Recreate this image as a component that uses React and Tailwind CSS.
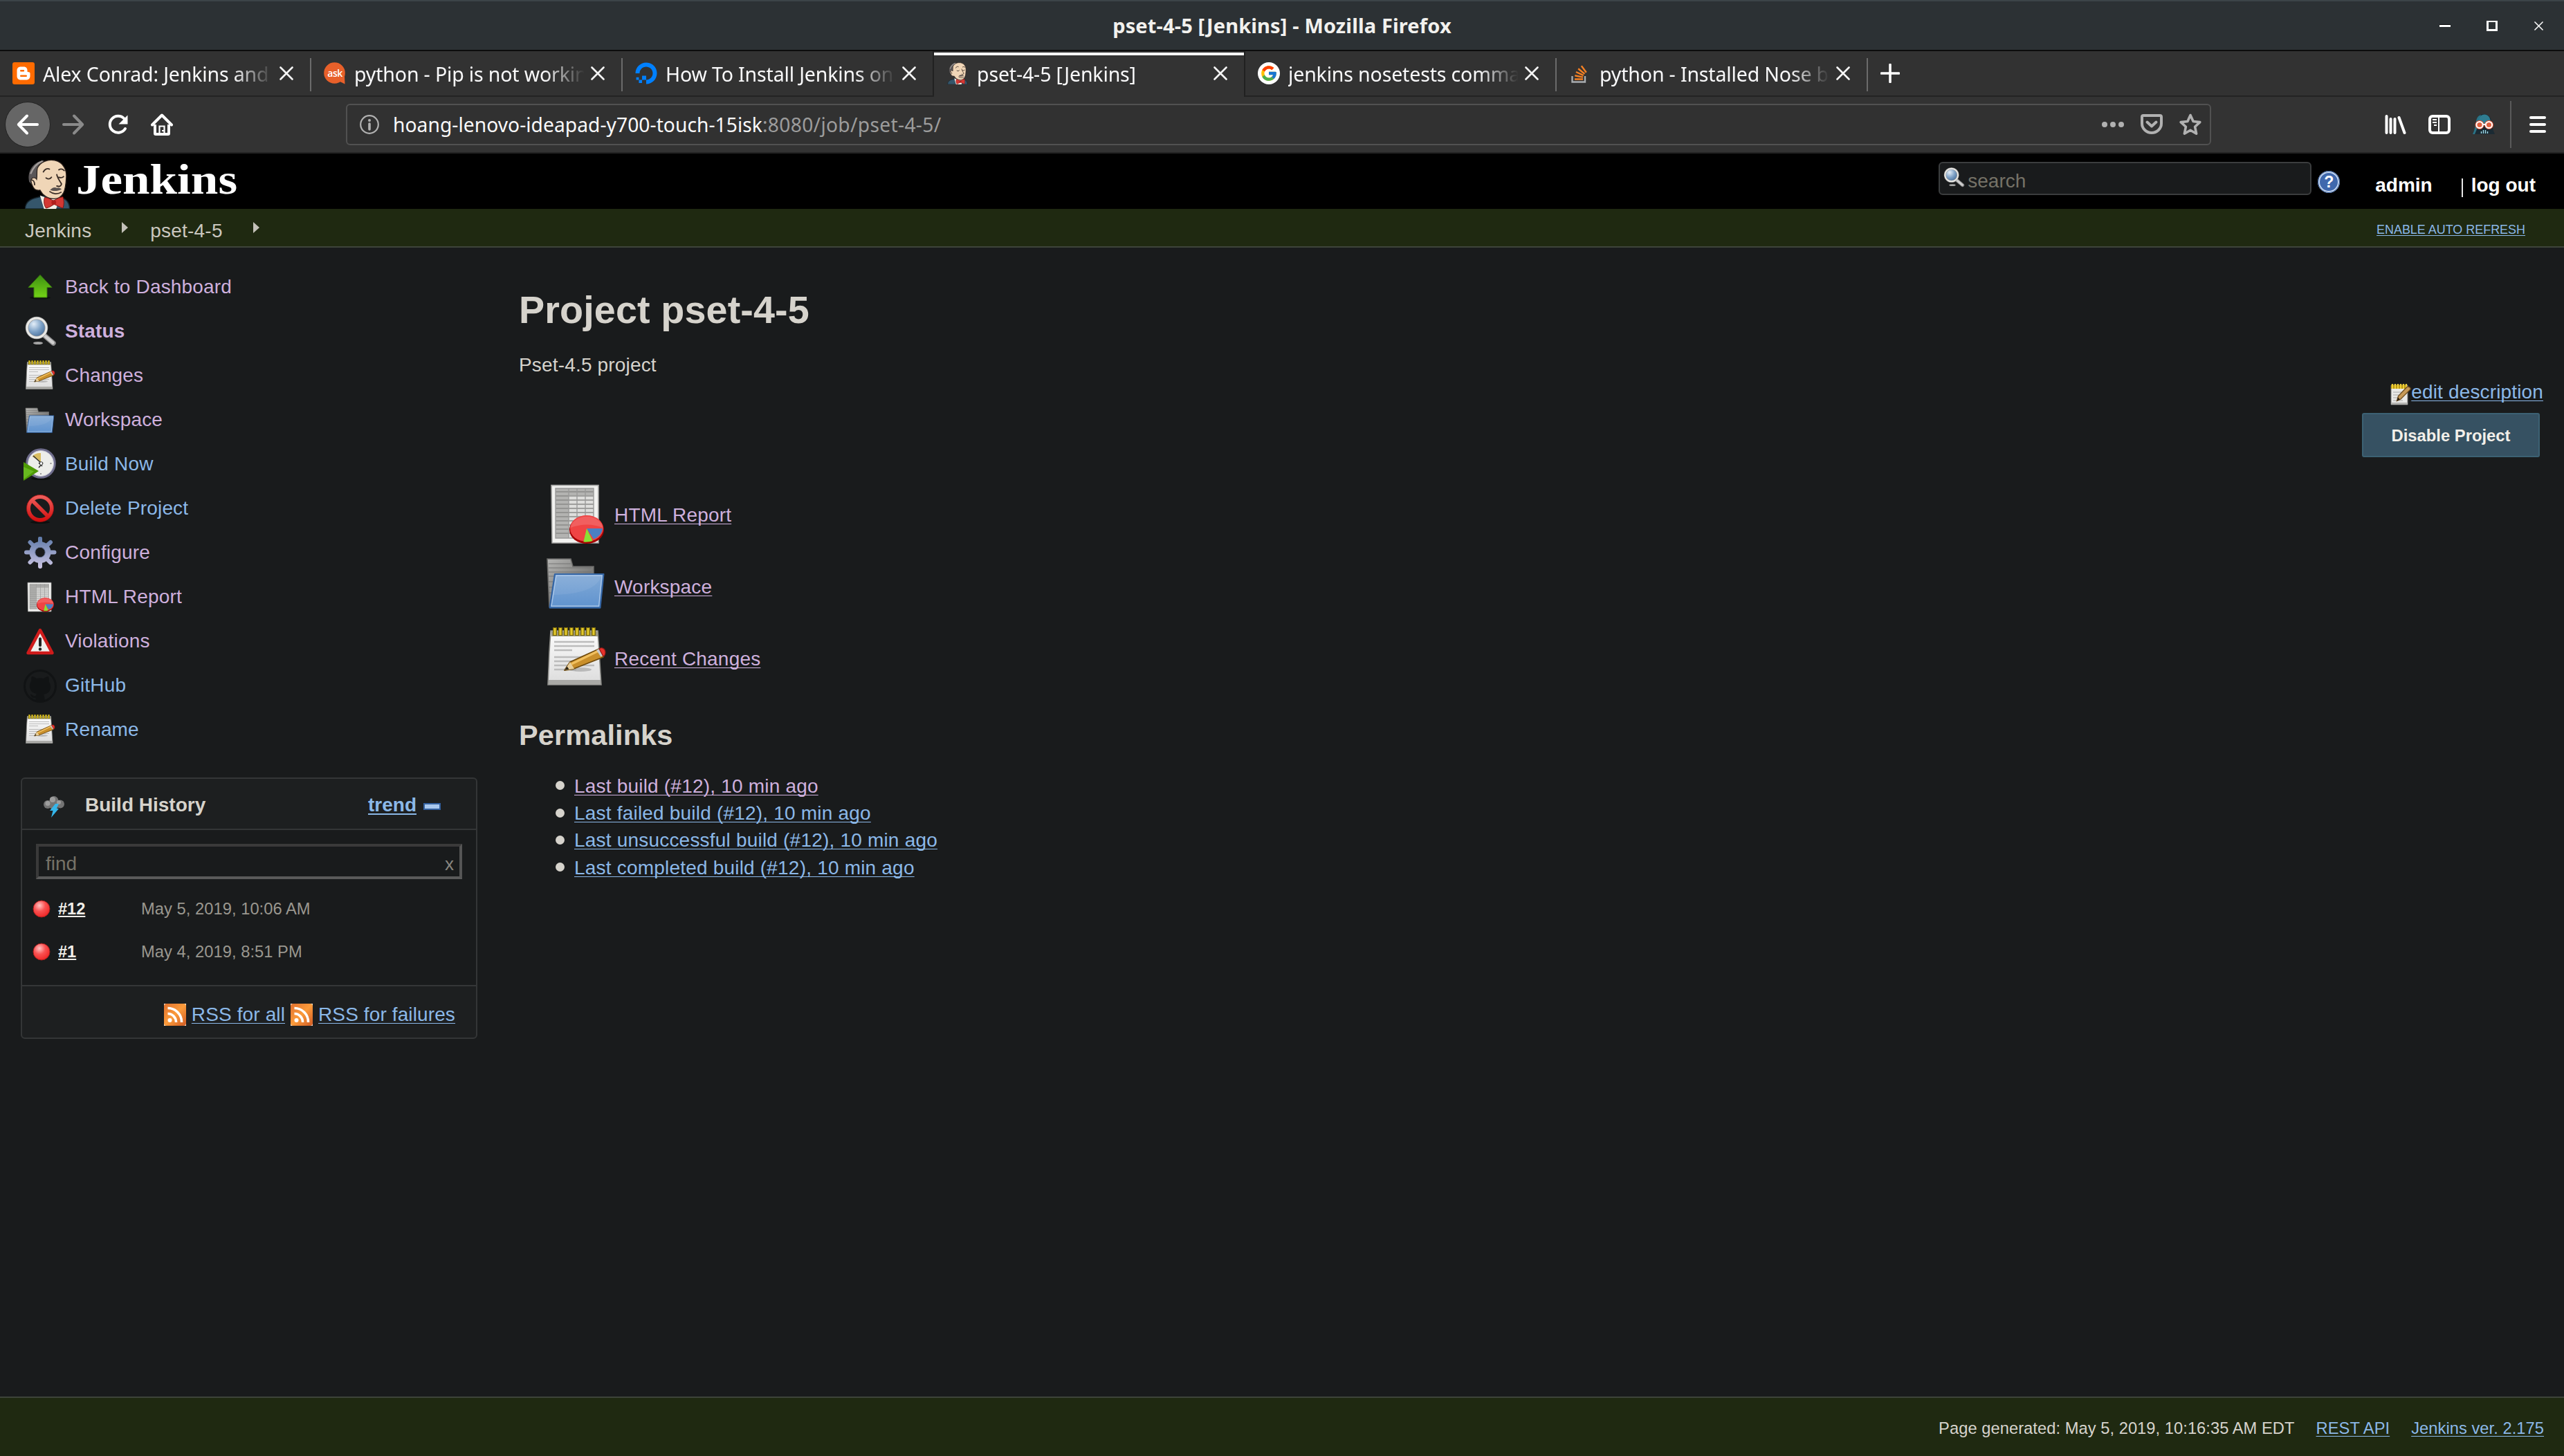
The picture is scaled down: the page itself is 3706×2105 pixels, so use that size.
import React from "react";
import { FcGoogle } from "react-icons/fc";
import { FaDigitalOcean } from "react-icons/fa";

/* ---------- browser icons ---------- */

const BloggerIcon = () => (
  <svg viewBox="0 0 32 32" className="size-8">
    <rect width="32" height="32" rx="3" fill="#ff6b00" />
    <path d="M12 6.5h4.5c3 0 5 2.200 5 5v1.500c0 .8.600 1.200 1.500 1.200 1.700 0 2.500.6 2.500 2v3.800c0 3.300-2.300 5.500-5.500 5.500h-8c-3.300 0-5.500-2.200-5.500-5.500v-8C6.500 8.700 8.700 6.500 12 6.500z" fill="#fff" />
    <path d="M12.200 12.200h3.800M12.200 19.700h7.600" stroke="#ff6b00" strokeWidth="2.400" strokeLinecap="round" />
  </svg>
);

const AskIcon = () => (
  <span className="relative flex size-8 items-center justify-center">
    <svg viewBox="0 0 32 32" className="absolute inset-0 size-8">
      <circle cx="15.500" cy="15.500" r="15.300" fill="#e8602a" />
      <path d="M22 26l8-6 .5 11.500-6-3z" fill="#e8602a" />
    </svg>
    <span className="relative font-['Open_Sans'] text-[14px] leading-none font-semibold tracking-[-0.500px] text-white">ask</span>
  </span>
);

const JenkinsHead = ({ className }) => (
  <svg viewBox="0 0 66 74" className={className} preserveAspectRatio="xMidYMin meet">
    <path d="M0 74c0-8 4-13 14-16l12-3 22 1 10 3c5 3 8 8 8 15z" fill="#35566b" stroke="#16242d" strokeWidth="1.500" />
    <path d="M22 54l6 20h18l6-18-14 4z" fill="#f3efe6" />
    <path d="M6 34C3 22 8 8 22 3l6-1L20 36l-6 6z" fill="#5a5657" />
    <path d="M8 22C12 12 18 6 26 3" stroke="#a39d9b" strokeWidth="2.500" fill="none" />
    <path d="M18 14C22 4 34 0 44 2c13 3 18 14 17 26-.5 9-1 16-4 22-3 6-8 9-14 9-9 0-17-5-21-13-3 1-8 0-10-4-3-5-5-12-1-14 3-1 5 0 6 2 1-6 0-11 1-16z" fill="#f0d6b7" stroke="#2b211c" strokeWidth="1.300" />
    <path d="M9 31c3 0 5 3 5 7M27 19c2-4 6-6 9-4M50 16c3-2 6-1 8 1M31 28c3 2 6 2 8-1M50 27c3 1 5 1 7-1M47 23c1 6 5 10 7 14-1 4-4 4-7 3" fill="none" stroke="#3a2d26" strokeWidth="1.900" strokeLinecap="round" />
    <path d="M37 46c3-3 6-5 10-3 3-1 6 0 7 2-6 3-12 3-17 1z" fill="#5b5350" />
    <path d="M36 48c5 4 12 5 18 1" fill="none" stroke="#3a2d26" strokeWidth="1.700" />
    <path d="M29 57c5 0 9 3 13 5 5-3 9-5 14-6 2 5 2 12 0 17-5-2-9-4-13-6-4 3-8 5-12 6-3-4-4-11-2-16z" fill="#d33833" stroke="#7c1512" strokeWidth="1" />
    <circle cx="42.500" cy="64.500" r="3.500" fill="#b01f1b" />
  </svg>
);

const StackIcon = () => (
  <svg viewBox="0 0 32 32" className="size-8" fill="none">
    <path d="M4.500 20v8.500h18.500V20" stroke="#a9adb0" strokeWidth="2.400" />
    <path d="M8 24.500h12M8.300 19.300l11.700 2.300M10 14l10.800 5M13.200 9.300l9.200 7.500M17.800 5.300l7 9.500" stroke="#f48024" strokeWidth="2.400" />
  </svg>
);

const CloseX = ({ className = "size-5" }) => (
  <svg viewBox="0 0 20 20" className={className}>
    <path d="M1.500 1.500l17 17M18.500 1.500l-17 17" stroke="#f5f5f5" strokeWidth="2.600" strokeLinecap="round" />
  </svg>
);

const ArrowIcon = ({ color, flip }) => (
  <svg viewBox="0 0 32 32" className={flip ? "size-8 -scale-x-100" : "size-8"}>
    <path d="M30 16H3M15 3.500L2.800 16 15 28.500" fill="none" stroke={color} strokeWidth="4" strokeLinecap="round" strokeLinejoin="round" />
  </svg>
);

const ReloadIcon = () => (
  <svg viewBox="0 0 32 32" className="size-8">
    <path d="M25.500 7.500A12 12 0 1 0 27 22" fill="none" stroke="#fff" strokeWidth="4" strokeLinecap="round" />
    <path d="M30.500 2.500v13h-13z" fill="#fff" />
  </svg>
);

const HomeIcon = () => (
  <svg viewBox="0 0 32 32" className="size-8">
    <path d="M2 16.500L16 2.500l14 14" fill="none" stroke="#fff" strokeWidth="4" strokeLinecap="round" strokeLinejoin="round" />
    <path d="M6 16v13a1 1 0 0 0 1 1h18a1 1 0 0 0 1-1V16" fill="none" stroke="#fff" strokeWidth="4" />
    <path d="M12.500 30V18.500h7V30M16 25h3" fill="none" stroke="#fff" strokeWidth="2.200" />
  </svg>
);

const InfoIcon = () => (
  <svg viewBox="0 0 28 28" className="size-7">
    <circle cx="14" cy="14" r="12.800" fill="none" stroke="#b1b1b1" strokeWidth="2.200" />
    <circle cx="14" cy="8" r="2" fill="#b1b1b1" />
    <path d="M14 13v8" stroke="#b1b1b1" strokeWidth="3.600" strokeLinecap="round" />
  </svg>
);

const DotsIcon = () => (
  <svg viewBox="0 0 32 32" className="size-8" fill="#b1b1b1">
    <circle cx="4" cy="16" r="4" /><circle cx="16" cy="16" r="4" /><circle cx="28" cy="16" r="4" />
  </svg>
);

const PocketIcon = () => (
  <svg viewBox="0 0 32 32" className="size-8" fill="none" stroke="#b1b1b1" strokeLinecap="round" strokeLinejoin="round">
    <path d="M4 3h24a2 2 0 0 1 2 2v9.500a14 13.500 0 0 1-28 0V5a2 2 0 0 1 2-2z" strokeWidth="4" />
    <path d="M9.500 12.500l6.500 6 6.500-6" strokeWidth="4" />
  </svg>
);

const StarIcon = () => (
  <svg viewBox="0 0 32 32" className="size-8">
    <path d="M16 2.500l4.100 9 9.700 1.100-7.200 6.700 2 9.900L16 24.300l-8.600 4.900 2-9.900-7.200-6.700 9.700-1.100z" fill="none" stroke="#b1b1b1" strokeWidth="3.600" strokeLinejoin="round" />
  </svg>
);

const LibraryIcon = () => (
  <svg viewBox="0 0 32 32" className="size-8" stroke="#fff" strokeWidth="4" strokeLinecap="round">
    <path d="M4 4v24M10 8v20M16 8v20M22 6l8 22" transform="translate(-0.500 0)" />
  </svg>
);

const SidebarIcon = () => (
  <svg viewBox="0 0 32 32" className="size-8" fill="none" stroke="#fff">
    <rect x="2" y="4" width="28" height="24" rx="4" strokeWidth="4" />
    <path d="M15 4v24" strokeWidth="2" />
    <path d="M6 9h6M6 13h6M8 17h4" strokeWidth="2" />
  </svg>
);

const VaderIcon = () => (
  <svg viewBox="0 0 32 32" className="size-8">
    <path d="M0 30C3 24 4 17 5 11 6 4 11 1 16 1s10 3 11 10c1 6 2 13 5 19z" fill="#1b2a33" />
    <path d="M0 30C3 24 4 17 5 11 6 6 8 3 12 2L8 18 3 30z" fill="#2b7386" />
    <path d="M9 12C9 5 12 1.500 17 1.500S25 5 26 12l-4 5H12z" fill="#2f7d91" />
    <circle cx="10" cy="16.500" r="5" fill="#e8502f" stroke="#e8502f" strokeWidth="3" />
    <circle cx="23.500" cy="16.500" r="5" fill="#e8502f" stroke="#e8502f" strokeWidth="3" />
    <circle cx="10" cy="16.500" r="4.600" fill="#e0603f" stroke="#fff" strokeWidth="2" />
    <circle cx="23.500" cy="16.500" r="4.600" fill="#e0603f" stroke="#fff" strokeWidth="2" />
    <path d="M14.500 16h4.500" stroke="#fff" strokeWidth="2" />
    <path d="M12.500 26v3M15.500 24v5M18.500 24v5M21.500 26v3" stroke="#9fdcea" strokeWidth="1.400" />
  </svg>
);

/* ---------- page icons ---------- */

const UpIcon = ({ className }) => (
  <svg viewBox="0 0 48 48" className={className}>
    <defs><linearGradient id="up" x1="0" y1="0" x2="0" y2="1"><stop offset="0" stopColor="#3d8f12" /><stop offset="1" stopColor="#73d216" /></linearGradient></defs>
    <ellipse cx="24" cy="38.500" rx="15" ry="2" fill="#0d0f0f" />
    <path d="M24 5.500l17 18h-7v14.500H15V23.500H7z" fill="url(#up)" stroke="#3a7d0c" strokeWidth="1" />
  </svg>
);

const SearchIcon = ({ className }) => (
  <svg viewBox="0 0 48 48" className={className}>
    <defs><radialGradient id="lens" cx="0.350" cy="0.300" r="0.800"><stop offset="0" stopColor="#e4eef8" /><stop offset="0.500" stopColor="#7da1c6" /><stop offset="1" stopColor="#3d638f" /></radialGradient></defs>
    <ellipse cx="21" cy="40" rx="7" ry="2" fill="#c7c7c7" opacity="0.800" />
    <path d="M29 28l14 12" stroke="#8b8b8b" strokeWidth="7.500" strokeLinecap="round" />
    <path d="M29 28l13.500 11.500" stroke="#cfcfcf" strokeWidth="4.500" strokeLinecap="round" />
    <circle cx="19" cy="18" r="14" fill="url(#lens)" stroke="#9b9b9b" strokeWidth="4.500" />
    <circle cx="19" cy="18" r="14" fill="none" stroke="#e9e9e6" strokeWidth="3" />
  </svg>
);

const NotepadIcon = ({ className }) => (
  <svg viewBox="0 0 48 48" className={className}>
    <defs>
      <linearGradient id="paper" x1="0" y1="0" x2="0" y2="1"><stop offset="0" stopColor="#fcfcfc" /><stop offset="1" stopColor="#dcdcdc" /></linearGradient>
    </defs>
    <path d="M5.500 3.500h34l1 15 1.500 24H3.500l1-24z" fill="url(#paper)" stroke="#8a8a86" strokeWidth="0.800" />
    <path d="M6 4h33.500v3.500H6z" fill="#9a9780" />
    <path d="M4 39h37.500v3H4z" fill="#a9a9a6" />
    <path d="M8.500 1v6M12.500 1v6M16.500 1v6M20.500 1v6M24.500 1v6M28.500 1v6M32.500 1v6M36.500 1v6" stroke="#7b6a0c" strokeWidth="3" />
    <path d="M8.500 1.500v5M12.500 1.500v5M16.500 1.500v5M20.500 1.500v5M24.500 1.500v5M28.500 1.500v5M32.500 1.500v5M36.500 1.500v5" stroke="#e3c92c" strokeWidth="1.600" />
    <path d="M8 11.500h29M8 14.500h29M8 17.500h13M8 22.500h29M8 25.500h24M8 28.500h29M8 31.500h16" stroke="#bcbcbc" strokeWidth="1.200" />
    <ellipse cx="27" cy="31.500" rx="8" ry="1.500" fill="#9c9c9c" opacity="0.600" />
    <path d="M15.500 32l4-6L40.500 16.500l4 3-1 3L22 31z" fill="#c98f2b" stroke="#6e4a0e" strokeWidth="0.900" strokeLinejoin="round" />
    <path d="M20.500 27.500L40 18" stroke="#f0bf5e" strokeWidth="1.600" />
    <path d="M15.500 32l4-6 3 5z" fill="#e8cf9c" />
    <path d="M15.500 32l1.800-2.700 1.400 2z" fill="#2b2418" />
    <path d="M38.500 17.500l2.500-1.200 3 4.700-2.300 1.300z" fill="#c9c9c9" />
    <path d="M40.500 16.500c2-1.500 4.500 0 4.500 2.500 0 1.500-.5 2.500-1.500 3z" fill="#e8312b" stroke="#8f1a16" strokeWidth="0.600" />
  </svg>
);

const FolderIcon = ({ className }) => (
  <svg viewBox="0 0 48 48" className={className}>
    <defs>
      <linearGradient id="fold" x1="0" y1="0" x2="0" y2="1"><stop offset="0" stopColor="#83aad6" /><stop offset="1" stopColor="#5f93cf" /></linearGradient>
      <linearGradient id="foldback" x1="0" y1="0" x2="1" y2="1"><stop offset="0" stopColor="#b5b5b3" /><stop offset="1" stopColor="#585856" /></linearGradient>
    </defs>
    <g transform="translate(0 -2.500)">
      <path d="M3 8.500h17l1.500 5.500H36.500V43H4.500z" fill="url(#foldback)" stroke="#6a6a68" strokeWidth="0.800" />
      <path d="M4 12h16M4 15h31M4 18h31M4 21h6M4 25h4M4 29h4M4 33h4" stroke="#6b6b69" strokeWidth="0.400" />
      <path d="M8.500 19.500h35.200l-2.500 24.300H4.800z" fill="url(#fold)" stroke="#3465a4" strokeWidth="1.100" strokeLinejoin="round" />
      <path d="M9.500 20.600h33l-2.200 22H6z" fill="none" stroke="#a9c6e8" strokeWidth="0.700" />
      <path d="M9.500 21h32.500c-3 9-15 13-34.500 13.500z" fill="#fff" opacity="0.070" />
    </g>
  </svg>
);

const ReportIcon = ({ className }) => (
  <svg viewBox="0 0 48 48" className={className}>
    <path d="M6 2.300h34V44H6.500z" fill="#f2f2f0" stroke="#a5a5a3" strokeWidth="0.800" />
    <rect x="9" y="4.500" width="27.500" height="36" fill="#dededc" />
    <rect x="9" y="4.500" width="27.500" height="5" fill="#b3b3b1" />
    <rect x="9" y="4.500" width="9.500" height="36" fill="#b3b3b1" />
    <path d="M9 7h27.500M9 10h27.500M9 13h27.500M9 16h27.500M9 19h27.500M9 22h27.500M9 25h27.500M9 28h27.500M9 31h27.500M9 34h27.500M9 37h27.500" stroke="#8a8a88" strokeWidth="0.700" />
    <path d="M9 4.500h27.500v36H9zM18.500 4.500v36M24.500 4.500v36M30.500 4.500v36" fill="none" stroke="#9b9b99" strokeWidth="0.700" />
    <ellipse cx="31.500" cy="34.500" rx="12.500" ry="10" fill="#a40000" />
    <ellipse cx="31.500" cy="33.500" rx="12" ry="9.500" fill="#ef4444" />
    <path d="M19.800 33a11.800 9.300 0 0 1 23.400 0c-7-3-16-3-23.400 0z" fill="#fff" opacity="0.150" />
    <path d="M31.500 33.500h11.500a12 10 0 0 1-6.500 7.800z" fill="#4a80c4" />
    <path d="M31.500 33.500l4.300 9c-2 .7-4.300 1-6.600.8z" fill="#8ae234" />
  </svg>
);

const ClockIcon = ({ className }) => (
  <svg viewBox="0 0 48 48" className={className}>
    <ellipse cx="25" cy="44" rx="14" ry="2" fill="#0d0f0f" />
    <circle cx="25" cy="22" r="20" fill="#ededea" stroke="#6f6d8c" strokeWidth="3.500" />
    <circle cx="25" cy="22" r="18.500" fill="none" stroke="#c6c5d6" strokeWidth="1" />
    <path d="M25 20L12.500 12A15 15 0 0 1 25 7z" fill="#d9bd62" />
    <path d="M14 11l11 10M27 26l-5-5M22 28l6-7" stroke="#333" strokeWidth="1.600" />
    <circle cx="25.500" cy="22" r="2.300" fill="#fff" stroke="#333" strokeWidth="1" />
    <path d="M38.500 22h2M25 36v2" stroke="#777" strokeWidth="1.400" />
    <path d="M0 20l22 13L0 47z" fill="#4e9a06" />
    <path d="M0 27l15 6.500L0 45z" fill="#67b81f" />
  </svg>
);

const StopIcon = ({ className }) => (
  <svg viewBox="0 0 48 48" className={className}>
    <defs><linearGradient id="stop" x1="0" y1="0" x2="0" y2="48" gradientUnits="userSpaceOnUse"><stop offset="0.100" stopColor="#ef5f5c" /><stop offset="0.900" stopColor="#d10a0a" /></linearGradient></defs>
    <ellipse cx="24" cy="43" rx="14" ry="2" fill="#0d0f0f" />
    <g fill="none" stroke="url(#stop)" strokeWidth="5.500"><circle cx="24" cy="23" r="16.800" /><path d="M12.500 11.500l23 23" /></g>
    <circle cx="24" cy="23" r="19.500" fill="none" stroke="#a21010" strokeWidth="0.800" />
  </svg>
);

const GearIcon = ({ className }) => (
  <svg viewBox="0 0 48 48" className={className}>
    <defs><linearGradient id="gear" x1="0" y1="0" x2="0" y2="46" gradientUnits="userSpaceOnUse"><stop offset="0" stopColor="#5d79a8" /><stop offset="1" stopColor="#cdc6e4" /></linearGradient></defs>
    <g fill="none" stroke="url(#gear)">
      <circle cx="24" cy="22.500" r="11.300" strokeWidth="8.500" />
      <path d="M24.010 8V2.500M24.010 37v6M9.500 22.510H4M38.500 22.510H44.500M14 12.500L9.500 8M34 32.500l5 5M34 12.500L39 8M14 32.500L9.500 37" strokeWidth="6" strokeLinecap="round" />
    </g>
    <circle cx="24" cy="22.500" r="7.200" fill="#191b1c" stroke="#5f6f93" strokeWidth="1" />
  </svg>
);

const WarningIcon = ({ className }) => (
  <svg viewBox="0 0 48 48" className={className}>
    <path d="M24 7l17.500 33h-35z" fill="#efefed" stroke="#cf1b1b" strokeWidth="4.500" strokeLinejoin="round" />
    <path d="M24 19.500v9.500" stroke="#222" strokeWidth="4" strokeLinecap="round" />
    <circle cx="24" cy="34.500" r="2.200" fill="#222" />
  </svg>
);

const GithubBadge = ({ className }) => (
  <svg viewBox="0 0 48 48" className={className}>
    <circle cx="24" cy="24" r="22.500" fill="none" stroke="#111314" strokeWidth="3" />
    <path d="M12 10c3 0 5 2 7 3 3-1 7-1 10 0 2-1 4-3 7-3 1 3 1 5 .5 7 2 3 3 6 2.500 10-1 6-5 8-10 9 1.500 2 1.500 5 1.500 10h-13v-5c-5 1-6-2-8-5 3-1 4 3 8 2 0-1 .5-2 1.500-3-5-1-9-3-10-9-.5-4 .5-7 2.500-10-.5-2-.5-4 .5-6z" fill="#111314" />
  </svg>
);

const StormIcon = ({ className }) => (
  <svg viewBox="0 0 32 32" className={className}>
    <g fill="#747474"><circle cx="7" cy="13" r="6" /><circle cx="16" cy="7.500" r="6.500" /><circle cx="25" cy="12.500" r="6" /><circle cx="16" cy="13.500" r="7" /></g>
    <g fill="#9d9d9d"><circle cx="14" cy="6" r="4" /><circle cx="7" cy="11.500" r="3.500" /><circle cx="23" cy="10" r="3" /></g>
    <path d="M18 12h5l-3.500 7H23L12 32l2.500-10H10z" fill="#35b6ea" />
  </svg>
);

const BallIcon = () => (
  <svg viewBox="0 0 26 26" className="size-[26px]">
    <defs><radialGradient id="ball" cx="0.380" cy="0.300" r="0.700"><stop offset="0" stopColor="#ffc4c4" /><stop offset="0.500" stopColor="#f95252" /><stop offset="1" stopColor="#ef2929" /></radialGradient></defs>
    <circle cx="13" cy="13" r="12" fill="url(#ball)" stroke="#a81c1c" strokeWidth="1" />
  </svg>
);

const RssIcon = () => (
  <svg viewBox="0 0 32 32" className="size-8 shrink-0">
    <defs><linearGradient id="rss" x1="0" y1="0" x2="1" y2="1"><stop offset="0" stopColor="#e0702e" /><stop offset="0.500" stopColor="#fb9b3b" /><stop offset="1" stopColor="#cf5a24" /></linearGradient></defs>
    <rect width="32" height="32" fill="#fbe9d8" />
    <rect width="32" height="32" rx="4" fill="url(#rss)" />
    <circle cx="8.500" cy="24" r="3" fill="#fff" />
    <path d="M5.500 14.500a12 12 0 0 1 12 12.500M5.500 6.500a20 20 0 0 1 20 20.500" fill="none" stroke="#fff" strokeWidth="3.600" />
  </svg>
);

const HelpIcon = () => (
  <span className="flex size-8 items-center justify-center rounded-full border-[3px] border-[#c5d6ee] bg-[#3f68ad] font-['Liberation_Sans'] text-[23px] leading-none font-bold text-white outline-1 -outline-offset-1 outline-[#2f5697]">?</span>
);

const EditIcon = () => (
  <svg viewBox="0 0 32 32" className="size-8">
    <path d="M3 3h24v28H3z" fill="#e9e9e7" stroke="#777" strokeWidth="1" />
    <path d="M3 28h24v3H3z" fill="#b3b3b0" />
    <path d="M3 2.500h23v5.500H3z" fill="#b8930c" />
    <path d="M5 1v7M9 1v7M13 1v7M17 1v7M21 1v7M25 1v7" stroke="#edcf3a" strokeWidth="2.200" />
    <path d="M6 13h14M6 17h12M6 21h8M6 25h14" stroke="#bdbdbd" strokeWidth="1.400" />
    <path d="M11.500 25.500l2-7L26 5.500c2-1.500 6 1 5 3.500L17 23z" fill="#c79a58" stroke="#6b4a1c" strokeWidth="1.300" />
    <path d="M11.500 25.500l1.500-5 3 3z" fill="#2e2213" />
  </svg>
);

/* ---------- data ---------- */

const tabs = [
  { icon: <BloggerIcon />, title: "Alex Conrad: Jenkins and" },
  { icon: <AskIcon />, title: "python - Pip is not workin" },
  { icon: <FaDigitalOcean className="size-8 text-[#0080ff]" />, title: "How To Install Jenkins on" },
  { icon: <JenkinsHead className="size-8" />, title: "pset-4-5 [Jenkins]", active: true },
  { icon: <span className="flex size-8 items-center justify-center rounded-full bg-white"><FcGoogle className="size-[26px]" /></span>, title: "jenkins nosetests comma" },
  { icon: <StackIcon />, title: "python - Installed Nose b" },
];

const VISITED = "text-[#ceb0dd]";
const LINK = "text-[#8bb8e8]";

const tasks = [
  { Icon: UpIcon, label: "Back to Dashboard", color: VISITED },
  { Icon: SearchIcon, label: "Status", color: "text-[#ceb0dd] font-bold" },
  { Icon: NotepadIcon, label: "Changes", color: VISITED },
  { Icon: FolderIcon, label: "Workspace", color: VISITED },
  { Icon: ClockIcon, label: "Build Now", color: LINK },
  { Icon: StopIcon, label: "Delete Project", color: LINK },
  { Icon: GearIcon, label: "Configure", color: VISITED },
  { Icon: ReportIcon, label: "HTML Report", color: VISITED },
  { Icon: WarningIcon, label: "Violations", color: VISITED },
  { Icon: GithubBadge, label: "GitHub", color: LINK },
  { Icon: NotepadIcon, label: "Rename", color: LINK },
];

const shortcuts = [
  { Icon: ReportIcon, label: "HTML Report", nudge: "mt-0" },
  { Icon: FolderIcon, label: "Workspace", nudge: "-mt-[11px]" },
  { Icon: NotepadIcon, label: "Recent Changes", nudge: "mt-0" },
];

const permalinks = [
  { label: "Last build (#12), 10 min ago", color: VISITED },
  { label: "Last failed build (#12), 10 min ago", color: LINK },
  { label: "Last unsuccessful build (#12), 10 min ago", color: LINK },
  { label: "Last completed build (#12), 10 min ago", color: LINK },
];

const builds = [
  { id: "#12", date: "May 5, 2019, 10:06 AM" },
  { id: "#1", date: "May 4, 2019, 8:51 PM" },
];

const thin = "underline decoration-1 underline-offset-[3px] [text-decoration-skip-ink:none]";

/* ---------- browser chrome ---------- */

function TitleBar() {
  return (
    <div className="grid h-[74px] grid-cols-[1fr_auto_1fr] items-center border-t-2 border-b-2 border-t-[#3c4448] border-b-[#0c0c0c] bg-[#2c3134]">
      <span />
      <span className="text-[29px] leading-9 font-bold tracking-[0.150px] text-[#f2f1ee]">pset-4-5 [Jenkins] - Mozilla Firefox</span>
      <div className="flex items-center justify-end pr-[30px]">
        <span className="mr-[52px] h-1 w-4 border-t border-black bg-white" />
        <span className="mr-[53px] h-[15px] w-4 border-[3px] border-t-2 border-white" />
        <CloseX className="size-[13px]" />
      </div>
    </div>
  );
}

function Tab({ icon, title, active, beforeActive }) {
  return (
    <div className={active
      ? "relative flex h-[66px] w-[450px] items-center border-r-2 border-[#212121] bg-[#333333] pb-0.5 pl-[18px]"
      : "relative flex h-[66px] w-[450px] items-center border-b-2 border-[#232323] pl-[18px]"}>
      {active && <span className="absolute top-0.5 left-0 h-1 w-[448px] bg-white" />}
      {icon}
      <span className="ml-3 w-[336px] overflow-hidden pt-0.5 text-[28.500px] leading-[38px] tracking-[-0.150px] whitespace-nowrap text-[#f9f9fa] [mask-image:linear-gradient(to_right,black_82%,transparent_99%)]">{title}</span>
      <span className="ml-1.5 flex"><CloseX /></span>
      {!active && <span className={beforeActive ? "absolute top-0 right-0 h-16 w-0.5 bg-[#212121]" : "absolute top-2.5 right-0 h-12 w-0.5 bg-[#6b6b6b]"} />}
    </div>
  );
}

function TabStrip() {
  return (
    <div className="flex h-[66px] bg-[#323232]">
      {tabs.map((t, i) => <Tab key={t.title} {...t} beforeActive={i === 2} />)}
      <div className="flex flex-1 items-center border-b-2 border-[#232323] pl-[18px]">
        <svg viewBox="0 0 28 28" className="size-7"><path d="M14 1.500v25M1.500 14h25" stroke="#fff" strokeWidth="3.600" strokeLinecap="round" /></svg>
      </div>
    </div>
  );
}

function Toolbar() {
  return (
    <div className="flex h-[82px] items-center border-b-2 border-[#232323] bg-[#333333]">
      <span className="ml-[7px] flex size-[66px] items-center justify-center rounded-full border border-[#222] bg-[#666666]"><ArrowIcon color="#fff" /></span>
      <span className="ml-[17px]"><ArrowIcon color="#8a8a8a" flip /></span>
      <span className="ml-[32px]"><ReloadIcon /></span>
      <span className="ml-[32px]"><HomeIcon /></span>
      <div className="ml-[250px] flex h-[60px] w-[2696px] items-center rounded-[6px] border-2 border-[#515151] bg-[#313131] pl-[18px] text-[28.200px] leading-[38px]">
        <InfoIcon />
        <span className="ml-5 tracking-[0.050px] text-[#f9f9fa]">hoang-lenovo-ideapad-y700-touch-15isk<span className="tracking-[0.320px] text-[#9c9c9c]">:8080/job/pset-4-5/</span></span>
        <div className="mr-3 ml-auto flex gap-6"><DotsIcon /><PocketIcon /><StarIcon /></div>
      </div>
      <div className="ml-auto flex h-[68px] items-center gap-8 border-r-2 border-[#5a5a5a] pr-[22px]">
        <LibraryIcon /><SidebarIcon /><VaderIcon />
      </div>
      <div className="mr-[26px] ml-[26px] flex flex-col gap-1.5">
        <span className="h-1 w-6 rounded-full bg-white" />
        <span className="h-1 w-6 rounded-full bg-white" />
        <span className="h-1 w-6 rounded-full bg-white" />
      </div>
    </div>
  );
}

/* ---------- Jenkins page ---------- */

function Header() {
  return (
    <header className="flex h-20 items-start bg-black text-[28px] leading-8 text-white">
      <JenkinsHead className="mt-2 ml-[36px] h-[72px] w-[65px]" />
      <span className="mt-[8px] ml-[9px] origin-left scale-x-[1.165] font-['Liberation_Serif'] text-[61px] leading-[60px] font-bold">Jenkins</span>
      <div className="mt-3 ml-auto flex h-12 w-[539px] items-center rounded-[6px] border-2 border-[#3b3d3e] bg-[#191b1c] pl-1">
        <SearchIcon className="size-8 -translate-y-px" />
        <span className="ml-1 pt-[7px] text-[#757267]">search</span>
      </div>
      <span className="mt-[25px] ml-[9px]"><HelpIcon /></span>
      <span className="mt-[30px] ml-[51px] font-bold">admin</span>
      <span className="mt-[36px] ml-[42px] h-[27px] w-0.5 bg-[#e8e8e8]" />
      <span className="mt-[30px] mr-[41px] ml-[12px] font-bold">log out</span>
    </header>
  );
}

const Chevron = ({ className }) => (
  <svg viewBox="0 0 9 16" className={`h-4 w-[9px] ${className}`}><path d="M0 0l9 8-9 8z" fill="#c3c1b9" /></svg>
);

function Breadcrumbs() {
  return (
    <nav className="flex h-14 items-center border-b-2 border-[#3e443a] bg-[#1f2911] text-[28px] leading-8 text-[#cac7bf]">
      <span className="ml-[36px] pt-[9px] tracking-[0.200px]">Jenkins</span>
      <Chevron className="ml-[44px]" />
      <span className="ml-[32px] pt-[9px] tracking-[0.200px]">pset-4-5</span>
      <Chevron className="ml-[44px]" />
      <a className={`mr-[56px] ml-auto pt-1.5 text-[17.950px] leading-6 underline decoration-1 underline-offset-2 ${LINK}`}>ENABLE AUTO REFRESH</a>
    </nav>
  );
}

function BuildHistory() {
  return (
    <section className="mt-[37px] ml-[30px] h-[378px] w-[660px] rounded-[6px] border-2 border-[#343637] bg-[#1d1f20]">
      <div className="flex h-[74px] items-center border-b-2 border-[#343637] font-bold">
        <StormIcon className="ml-[30px] size-8 translate-y-1" />
        <span className="ml-[29px] pt-1 text-[#d6d3cc]">Build History</span>
        <a className={`ml-auto pt-1 underline decoration-2 underline-offset-[3px] ${LINK}`}>trend</a>
        <span className="mt-[8px] mr-[51px] ml-[10px] h-[10px] w-[25px] border-2 border-[#33609f] bg-[#a9c8ee]" />
      </div>
      <div className="flex h-[224px] flex-col bg-[#191b1c] pt-5">
        <div className="mx-5 flex h-[51px] items-center justify-between border-4 border-t-[#3a3a3a] border-r-[#555] border-b-[#5a5a5a] border-l-[#3a3a3a] pr-2 pl-[10px] text-[#757267]">
          <span className="pt-1.5">find</span>
          <span className="pt-1.5 text-[26px] text-[#8a8780]">x</span>
        </div>
        <div className="mt-[12px]">
          {builds.map((b) => (
            <div key={b.id} className="flex h-[62px] items-center pl-[15px]">
              <BallIcon />
              <a className="ml-[11px] w-[120px] text-[23.600px] font-bold text-[#f0eee9] underline decoration-2 underline-offset-2 [text-decoration-skip-ink:none]">{b.id}</a>
              <span className="text-[23.700px] tracking-[0.050px] text-[#9a978f]">{b.date}</span>
            </div>
          ))}
        </div>
      </div>
      <div className="flex h-[76px] items-center justify-end border-t-2 border-[#343637] pt-[7px] pr-[30px] tracking-[0.120px]">
        <RssIcon />
        <a className={`ml-2 ${thin} ${LINK}`}>RSS for all</a>
        <span className="ml-2 flex"><RssIcon /></span>
        <a className={`ml-2 ${thin} ${LINK}`}>RSS for failures</a>
      </div>
    </section>
  );
}

function Sidebar() {
  return (
    <aside className="w-[750px] shrink-0 pt-[25px]">
      {tasks.map(({ Icon, label, color }) => (
        <div key={label} className="flex h-16 items-center pl-[34px]">
          <Icon className="size-12 translate-y-px" />
          <a className={`ml-[12px] tracking-[0.170px] ${color}`}>{label}</a>
        </div>
      ))}
      <BuildHistory />
    </aside>
  );
}

function Main() {
  return (
    <main className="flex flex-1 text-[#d6d3cc]">
      <div className="flex-1">
        <h1 className="mt-[58px] text-[55.700px] leading-[64px] font-bold tracking-[0.130px]">Project pset-4-5</h1>
        <p className="mt-[32px] tracking-[0.170px]">Pset-4.5 project</p>
        <div className="mt-[149px]">
          {shortcuts.map(({ Icon, label, nudge }) => (
            <div key={label} className="flex h-[104px] items-center pl-[35px]">
              <Icon className={`size-24 shrink-0 ${nudge}`} />
              <a className={`ml-[7px] tracking-[0.200px] ${thin} ${VISITED}`}>{label}</a>
            </div>
          ))}
        </div>
        <h2 className="mt-[34px] text-[41.500px] leading-[48px] font-bold tracking-[0.100px]">Permalinks</h2>
        <ul className="mt-[30px]">
          {permalinks.map(({ label, color }) => (
            <li key={label} className="flex h-[39.400px] items-center pl-[53px]">
              <span className="mr-[14px] size-[13px] -translate-y-px rounded-full bg-[#d6d3cc]" />
              <a className={`tracking-[0.200px] ${thin} ${color}`}>{label}</a>
            </li>
          ))}
        </ul>
      </div>
      <div className="flex flex-col items-end pt-[190px]">
        <div className="mr-[30px] flex items-center">
          <span className="mt-1.5"><EditIcon /></span>
          <a className={`tracking-[0.150px] ${thin} ${LINK}`}>edit description</a>
        </div>
        <button className="mt-[11px] mr-[35px] h-16 w-[257px] rounded-[3px] border-2 border-[#3c6173] bg-[#365162] pt-0.5 text-[23.800px] font-bold text-[#f2efe9]">Disable Project</button>
      </div>
    </main>
  );
}

function Footer() {
  return (
    <footer className="flex h-[86px] items-center justify-end gap-[31px] border-t-2 border-[#3e443a] bg-[#1f2911] pt-[4px] pr-[29px] text-[23.700px] tracking-[0.050px] text-[#d6d3cc]">
      <span>Page generated: May 5, 2019, 10:16:35 AM EDT</span>
      <a className={`underline decoration-1 underline-offset-[3px] ${LINK}`}>REST API</a>
      <a className={`underline decoration-1 underline-offset-[3px] ${LINK}`}>Jenkins ver. 2.175</a>
    </footer>
  );
}

export default function App() {
  return (
    <div className="flex h-[2105px] w-[3706px] flex-col overflow-hidden bg-[#191b1c]">
      <div className="font-['Noto_Sans',sans-serif]">
        <TitleBar />
        <TabStrip />
        <Toolbar />
      </div>
      <div className="flex flex-1 flex-col font-['Liberation_Sans',sans-serif] text-[28px] leading-8">
        <Header />
        <Breadcrumbs />
        <div className="flex flex-1">
          <Sidebar />
          <Main />
        </div>
        <Footer />
      </div>
    </div>
  );
}
